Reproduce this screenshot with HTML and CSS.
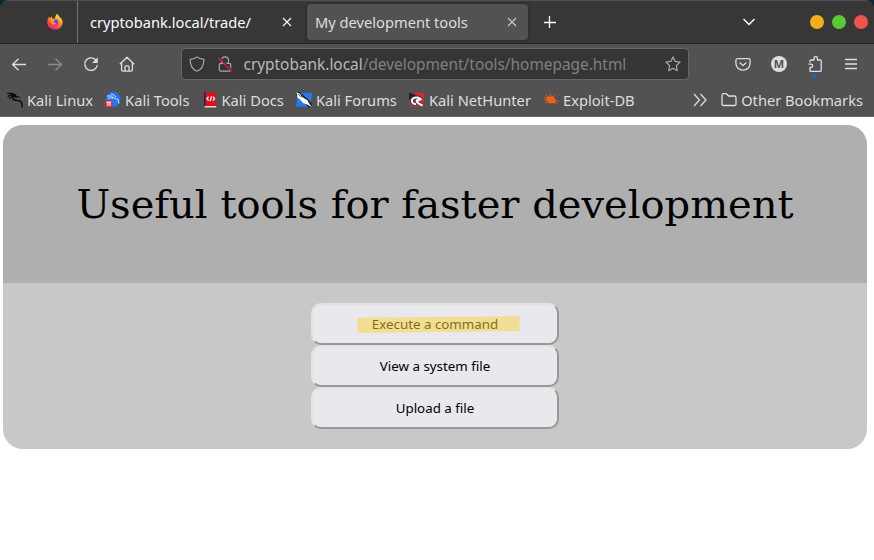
FILE: index.html
```html
<!DOCTYPE html>
<html lang="en">
<head>
<meta charset="utf-8">
<title>My development tools</title>
<link rel="stylesheet" href="styles.css">
</head>
<body>
<div class="desktop">
<div class="window">
  <header class="tabbar">
    <div class="pinned">
      <svg width="16" height="16" viewBox="0 0 16 16">
        <defs>
          <linearGradient id="fox" x1=".8" y1="0" x2=".25" y2="1"><stop offset="0" stop-color="#fff04a"/><stop offset=".4" stop-color="#ff9a22"/><stop offset=".7" stop-color="#ff4a3a"/><stop offset="1" stop-color="#f0148c"/></linearGradient>
        </defs>
        <path d="M10 0c1.600 1 2 2 2.400 3 .7.200 1.200.800 1.500 1.300C15.300 6 15.900 7.500 15.600 9.500 15 13.300 12 15.600 8 15.600 3.500 15.600.3 12.500.3 8.300.3 6.500.8 5 1.500 4l.3-1.600L3.200 4l1.200-1.700.8 2 2.800.200C8 2.500 8.800 1 10 0z" fill="url(#fox)"/>
        <circle cx="8" cy="8.200" r="3.300" fill="#7542e5"/>
        <path d="M3 5c1.500-.5 3-.2 4 .4l1.500.3c-.2 1-1.300 1.100-2 1.600.2 1.300 1.200 2.300 3 1.700-1 2.200-4 2.300-5 .3z" fill="#ff9a22"/>
      </svg>
    </div>
    <div class="tab">
      <span class="tab-title">cryptobank.local/trade/</span>
      <svg class="close" width="10" height="10" viewBox="0 0 10 10"><path d="M1 1l8 8M9 1l-8 8"/></svg>
    </div>
    <div class="tab active">
      <span class="tab-title">My development tools</span>
      <svg class="close" width="10" height="10" viewBox="0 0 10 10"><path d="M1 1l8 8M9 1l-8 8"/></svg>
    </div>
    <svg class="newtab" width="12" height="12" viewBox="0 0 12 12"><path d="M5.500 0v12M0 6.500h12"/></svg>
    <svg class="alltabs" width="14" height="10" viewBox="0 0 14 10"><path d="M1.500 2L7 7.500 12.500 2"/></svg>
    <div class="controls"><i class="min"></i><i class="max"></i><i class="quit"></i></div>
  </header>

  <nav class="toolbar">
    <div class="nav-buttons">
      <svg width="16" height="16" viewBox="0 0 16 16"><path d="M15 8.500H1.500M7.500 2.800L1.500 8.500l6 5.700"/></svg>
      <svg class="dim" width="16" height="16" viewBox="0 0 16 16"><path d="M1 8.500h13.500M8.500 2.800l6 5.700-6 5.700"/></svg>
      <svg width="16" height="16" viewBox="0 0 16 16"><path d="M13.300 4.600A6.300 6.300 0 1 0 14.300 9"/><path d="M14.800 1.200v5.800H9z" class="solid"/></svg>
      <svg width="16" height="16" viewBox="0 0 16 16"><path d="M.8 8.300L8 1.300l7.200 7M2.600 7v6.800q0 1.400 1.400 1.400h8q1.400 0 1.400-1.400V7M6 15v-4q0-1.200 1.200-1.200h1.600q1.200 0 1.200 1.200v4"/></svg>
    </div>
    <div class="urlbar">
      <svg width="16" height="16" viewBox="0 0 16 16"><path d="M8 .9C6.300 2.300 4 3 1.800 3.200c-.4 0-.7.300-.7.800.2 5.300 2 9.400 6.900 11.300 4.900-1.900 6.700-6 6.900-11.300 0-.5-.3-.8-.7-.8C12 3 9.700 2.300 8 .9z"/></svg>
      <svg class="lock" width="16" height="16" viewBox="0 0 16 16"><path d="M4.500 7V4.300a3.500 3.500 0 0 1 7 0V7M4 7.300h8q1.700 0 1.700 1.500v5q0 1.400-1.700 1.400H4q-1.700 0-1.700-1.400v-5Q2.300 7.300 4 7.300z"/><path class="gap" d="M2.300 1.200l13.500 13.500"/><path class="slash" d="M1.300 2l13.500 13.500"/></svg>
      <span class="url"><b>cryptobank.local</b>/development/tools/homepage.html</span>
      <svg class="star" width="16" height="16" viewBox="0 0 16 16"><path d="M8 .9l2.100 4.500 5 .7-3.700 3.400.9 5.200L8 12.300l-4.300 2.400.9-5.200L.9 6.100l5-.7z"/></svg>
    </div>
    <div class="actions">
      <svg width="16" height="16" viewBox="0 0 16 16"><path d="M2.800 2.700h10.400q1.900 0 1.900 1.800v2.800c0 4-3.100 6.800-7.100 6.800S.9 11.300.9 7.300V4.500q0-1.800 1.900-1.800zM4.700 6.500L8 9.600l3.300-3.100"/></svg>
      <span class="account">M</span>
      <span class="ext"><svg width="16" height="18" viewBox="0 0 16 18"><path d="M3 7.500V6q0-1 1-1h3V3.200a1.700 1.700 0 0 1 3.400 0V5h2.800q1 0 1 1v9.400q0 1-1 1H4q-1 0-1-1V12.500h1a1.700 1.700 0 0 0 0-3.400H1.500"/></svg><i class="dot"></i></span>
      <svg width="12" height="12" viewBox="0 0 12 12"><path d="M0 1.500h12M0 6h12M0 10.500h12"/></svg>
    </div>
  </nav>

  <nav class="bookmarks">
    <a><svg width="16" height="16" viewBox="0 0 16 16"><path d="M.3 1.200l5.500.5 3.500 1.600M.5 4.500l4-1.700 4 .8M2 6.500l3.500-2 3 0M8.800 3.300q-3.600.9-3 3.200.5 1.800 4 1.900 4 .2 5 3.100.4 1.600.2 4" fill="none" stroke="#080808" stroke-width="1.300"/><path d="M7 4.500l4-.5 3.700 2-3.400-.8-3 .6z M10 8l4 1 2 3-3-2z" fill="#080808"/></svg>Kali Linux</a>
    <a><svg width="16" height="16" viewBox="0 0 16 16"><circle cx="8" cy="7.500" r="7.400" fill="#2475f5"/><path d="M2 4q5-1 7 2l4 1.500 1 4M3 6.500q3-1.500 5 0M6 2q3 .5 5 3" stroke="#cce4ff" fill="none"/><circle cx="3.700" cy="11.700" r="3.800" fill="#e83036"/><path d="M1.500 10.200h4.600M2.900 10v4M5 10v4" stroke="#fff" fill="none"/></svg>Kali Tools</a>
    <a><svg width="16" height="16" viewBox="0 0 16 16"><path d="M2 .3h12v15H2z" fill="#dc1117"/><path d="M2 .3h1.500v15H2z" fill="#1d2459"/><path d="M2.500 14h11.700v1.500H2.500z" fill="#ddd"/><path d="M6.500 4.700l-1.500 2 1.500 2M11 4.700l1.500 2-1.500 2M9.500 4.400l-1.300 4.800" stroke="#fff" fill="none" stroke-width="1.300"/></svg>Kali Docs</a>
    <a><svg width="16" height="16" viewBox="0 0 16 16"><path d="M2 .8H16l-1.500 14H0z" fill="#2379f3"/><path d="M1 .8L6 5.500l5 4 4 5" fill="none" stroke="#262626" stroke-width="5"/><path d="M.5.300L4 1.800l1.500 2.700L8.500 6.500l3 1.800 1.200 2.500 3 4.200-4.500-2.500L7 11 4.500 8 1.500 5.500z" fill="#fff"/><path d="M2 2l3.500 3.300" stroke="#333" stroke-width=".8"/></svg>Kali Forums</a>
    <a><svg width="16" height="16" viewBox="0 0 16 16"><path d="M3 1h12.500L14 14.500H1z" fill="#df2538"/><path d="M0 .5l5 1.500 3 2L3 6.500 0 8z" fill="#252525"/><path d="M12 7.500Q10.500 4.800 7 5.300 3 6 3 9q.3 3 4.500 3.300M13 13.200L9 10.500Q7.500 9.300 8 8.300" fill="none" stroke="#333" stroke-width="3.400"/><path d="M12.300 8Q10.500 5 7 5.500 3 6 2.900 8.800 3 11.800 7 12.300M13.500 13.700L8.800 10.800Q7 9.500 7.800 8.500q1.200-1 2.700.4" fill="none" stroke="#fff" stroke-width="2"/></svg>Kali NetHunter</a>
    <a><svg width="16" height="16" viewBox="0 0 16 16"><path d="M4 4.500l6 0 3 3.500-1.500 3H6L3 7z" fill="#f06411"/><path d="M3 2.500l3 4M7.500 2l.5 4M1 5.500l5 2M.5 8.200l6-.2M2.500 11l5-2M6 12.500l3-3M10.500 12l1-2M11 9l3.500 3.500M11 8l4.500 1.500M9.500 5.500l2.500-2.500" stroke="#f06411" stroke-width=".9"/></svg>Exploit-DB</a>
    <svg class="more" width="14" height="14" viewBox="0 0 14 14"><path d="M1 1l5.500 6L1 13M7.500 1L13 7l-5.500 6"/></svg>
    <a class="other"><svg width="16" height="16" viewBox="0 0 16 16"><path d="M1 12.200V3.300q0-1.600 1.600-1.600h2.800L7.500 4h5.900q1.600 0 1.600 1.600v6.600q0 1.300-1.600 1.300H2.600Q1 13.500 1 12.200z"/></svg>Other Bookmarks</a>
  </nav>
</div>

<main class="page">
  <section class="card">
    <h1>Useful tools for faster development</h1>
    <div class="tools">
      <button><span class="marked">Execute a command<svg class="marker" width="163" height="18" viewBox="0 0 163 18"><path d="M.5 1.800L162.500.2V15L.5 17z"/></svg></span></button>
      <button>View a system file</button>
      <button>Upload a file</button>
    </div>
  </section>
</main>
</div>
</body>
</html>
```
FILE: styles.css
```css
* { box-sizing: border-box; }
body { margin: 0; background: #fff; font-family: "Noto Sans", sans-serif; }
svg { display: block; flex: none; }
.desktop { height: 560px; overflow: hidden; }
.window {
  background: linear-gradient(#0a2a3c, #08111b) 0 0 / 100% 20px no-repeat;
  color: #dedede;
  font-size: 14.67px;
}

.tabbar {
  display: flex;
  align-items: center;
  height: 44px;
  background: #373737;
  border-top: 1px solid #505050;
  border-bottom: 1px solid #242424;
  border-radius: 9px 9px 0 0;
}
.pinned {
  display: flex;
  align-items: center;
  width: 78px;
  height: 42px;
  padding-left: 47px;
  border-right: 1px solid #737373;
}
.tab {
  display: flex;
  align-items: center;
  justify-content: space-between;
  width: 221px;
  height: 36px;
  padding: 0 7px 0 12px;
  color: #fbfbfb;
  white-space: nowrap;
}
.tab.active {
  margin-left: 8px;
  padding: 0 11px 0 8px;
  background: #525252;
  border-radius: 4px;
  box-shadow: 0 0 3px rgba(0, 0, 0, .45);
  color: #dedede;
}
.tabbar path { fill: none; stroke: #fbfbfb; stroke-width: 1.1; }
.pinned path { stroke: none; fill: revert-layer; }
.active .close path { stroke: #cfcfcf; }
.newtab { margin-left: 16px; }
.newtab path { stroke-width: 1.3; }
.alltabs { margin-left: 186px; }
.alltabs path { stroke-width: 1.5; }
.controls { display: flex; gap: 8px; margin-left: 54px; }
.controls i { width: 14px; height: 14px; border-radius: 50%; }
.min { background: #f3ae1b; }
.max { background: #5bc936; }
.quit { background: #ed544d; }

.toolbar {
  display: flex;
  align-items: center;
  height: 40px;
  background: #525252;
}
.toolbar path { fill: none; stroke: #dedede; stroke-width: 1.3; stroke-linejoin: round; }
.toolbar .solid { fill: #dedede; stroke: none; }
.nav-buttons { display: flex; gap: 20px; margin-left: 11px; width: 170px; }
.toolbar .dim path { stroke: #8c8c8c; }
.urlbar {
  display: flex;
  align-items: center;
  width: 508px;
  height: 32px;
  padding: 0 7px;
  background: #353535;
  border: 1px solid #676767;
  border-radius: 4px;
}
.toolbar .urlbar path { stroke: #a9a9a9; stroke-width: 1.2; }
.lock { margin-left: 12px; }
.toolbar .urlbar .gap { stroke: #353535; stroke-width: 1.2; }
.toolbar .urlbar .slash { stroke: #f0143c; stroke-width: 1.4; }
.url { margin-left: 10.5px; font-size: 15.4px; color: #808080; white-space: nowrap; }
.url b { font-weight: 400; color: #b9b9b9; }
.star { margin-left: auto; }
.actions { display: flex; align-items: center; gap: 20px; margin-left: 46px; }
.account {
  width: 16px;
  height: 16px;
  border-radius: 50%;
  background: #dedede;
  color: #525252;
  font: 700 11px/16px "Noto Sans", sans-serif;
  text-align: center;
}
.ext { position: relative; margin-right: 2px; }
.dot {
  position: absolute;
  left: 6px;
  top: 19px;
  width: 4px;
  height: 4px;
  border-radius: 50%;
  background: #0a62f5;
}

.bookmarks {
  display: flex;
  align-items: center;
  height: 33px;
  padding: 0 0 1px 7px;
  background: #525252;
  border-bottom: 1px solid #686868;
}
.bookmarks a {
  display: flex;
  align-items: center;
  gap: 4px;
  margin-right: 12.1px;
  white-space: nowrap;
}
.bookmarks .more { margin-left: auto; margin-right: 14px; }
.bookmarks .other { margin-right: 11px; }
.more path, .other path { fill: none; stroke: #dedede; stroke-width: 1.3; }

.page { padding: 8px 7px 0 3px; }
.card {
  height: 324px;
  overflow: hidden;
  background: #c8c8c8;
  border-radius: 20px;
}
h1 {
  margin: 0;
  height: 158px;
  background: #afafaf;
  color: #000;
  font: 400 40px/158px "DejaVu Serif", serif;
  text-align: center;
  white-space: nowrap;
}
.tools { display: flex; flex-direction: column; align-items: center; padding-top: 20px; }
button {
  width: 248px;
  height: 42px;
  padding: 0;
  background: #e9e9ed;
  border: 2px solid;
  border-color: #e3e3e3 #979797 #979797 #e3e3e3;
  border-radius: 10px;
  color: #000;
  font: 13.33px "Noto Sans", sans-serif;
}
.marked { position: relative; color: #000; }
.marker { position: absolute; left: -15px; top: 1px; }
.marker path { fill: #fbd438; fill-opacity: .5; }
```
